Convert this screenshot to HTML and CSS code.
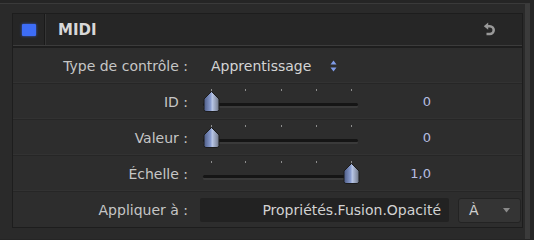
FILE: index.html
```html
<!DOCTYPE html>
<html lang="fr">
<head>
<meta charset="utf-8">
<link rel="stylesheet" href="styles.css">
</head>
<body>
<div class="frame">
  <div class="panel">
    <div class="header">
      <div class="check"><span class="led"></span></div>
      <div class="title">MIDI</div>
      <svg class="reset" width="12" height="15" viewBox="0 0 12 15">
        <path d="M0.8 4.2 L5.2 0.6 L5.2 7.8 Z" fill="#999"/>
        <path d="M4.5 4.2 H6.8 A3.9 3.9 0 0 1 6.8 12 H3.5" fill="none" stroke="#999" stroke-width="2.6"/>
      </svg>
    </div>
    <div class="row">
      <div class="label">Type de contrôle :</div>
      <div class="ctrl popup">
        <span>Apprentissage</span>
        <svg class="stepper" width="7" height="12" viewBox="0 0 7 12">
          <path d="M3.5 0.5 L6.5 4.5 H0.5 Z" fill="#7f9be8"/>
          <path d="M3.5 11.5 L6.5 7.5 H0.5 Z" fill="#7f9be8"/>
        </svg>
      </div>
    </div>
    <div class="row">
      <div class="label">ID :</div>
      <div class="ctrl slider">
        <i class="tick t1"></i><i class="tick t2"></i><i class="tick t3"></i><i class="tick t4"></i><i class="tick t5"></i>
        <div class="groove"></div>
        <svg class="thumb min" width="17" height="21" viewBox="0 0 17 21">
          <defs>
            <linearGradient id="g1" x1="0" y1="0" x2="1" y2="0">
              <stop offset="0" stop-color="#4d5c86"/>
              <stop offset="0.45" stop-color="#8b9ed0"/>
              <stop offset="0.55" stop-color="#b8c6e6"/>
              <stop offset="1" stop-color="#6f7686"/>
            </linearGradient>
          </defs>
          <path d="M8.5 0.5 L16 8 V18.5 Q16 20.5 14 20.5 H3 Q1 20.5 1 18.5 V8 Z" fill="url(#g1)" stroke="#1c1c1c" stroke-width="1"/>
        </svg>
      </div>
      <div class="value">0</div>
    </div>
    <div class="row">
      <div class="label">Valeur :</div>
      <div class="ctrl slider">
        <i class="tick t1"></i><i class="tick t2"></i><i class="tick t3"></i><i class="tick t4"></i><i class="tick t5"></i>
        <div class="groove"></div>
        <svg class="thumb min" width="17" height="21" viewBox="0 0 17 21">
          <path d="M8.5 0.5 L16 8 V18.5 Q16 20.5 14 20.5 H3 Q1 20.5 1 18.5 V8 Z" fill="url(#g1)" stroke="#1c1c1c" stroke-width="1"/>
        </svg>
      </div>
      <div class="value">0</div>
    </div>
    <div class="row">
      <div class="label">Échelle :</div>
      <div class="ctrl slider">
        <i class="tick t1"></i><i class="tick t2"></i><i class="tick t3"></i><i class="tick t4"></i><i class="tick t5"></i>
        <div class="groove"></div>
        <svg class="thumb max" width="17" height="21" viewBox="0 0 17 21">
          <path d="M8.5 0.5 L16 8 V18.5 Q16 20.5 14 20.5 H3 Q1 20.5 1 18.5 V8 Z" fill="url(#g1)" stroke="#1c1c1c" stroke-width="1"/>
        </svg>
      </div>
      <div class="value">1,0</div>
    </div>
    <div class="row last">
      <div class="label">Appliquer à :</div>
      <div class="ctrl field">Propriétés.Fusion.Opacité</div>
      <div class="button"><span>À</span><svg width="7" height="5" viewBox="0 0 7 5"><path d="M0 0 H7 L3.5 4.5 Z" fill="#8a8a8a"/></svg></div>
    </div>
  </div>
</div>
</body>
</html>
```

FILE: styles.css
```css
html, body {
  margin: 0;
  padding: 0;
}
body {
  width: 534px;
  height: 240px;
  background: #252525;
  font-family: "DejaVu Sans", "Liberation Sans", sans-serif;
  overflow: hidden;
}
.frame {
  margin-top: 3px;
  border-top: 1px solid #3a3a3a;
  height: 236px;
  width: 530px;
  box-sizing: border-box;
  background: #2a2a2a;
  border-right: 5px solid #3b3b3b;
  padding: 9px 0 0 12px;
}
.panel {
  width: 511px;
  height: 215px;
  box-sizing: border-box;
  border: 1px solid #1d1d1d;
  background: #2d2d2d;
}
.header {
  height: 31px;
  display: flex;
  align-items: center;
  background: #262626;
  border-bottom: 1px solid #3c3c3c;
  box-shadow: 0 2px 0 #1e1e1e;
  margin-bottom: 2px;
}
.check {
  width: 31px;
  height: 31px;
  border-right: 1px solid #1a1a1a;
  box-shadow: 1px 0 0 #353535;
  display: flex;
  align-items: center;
  justify-content: center;
}
.led {
  width: 14px;
  height: 12px;
  background: #3d6df7;
  border-radius: 1px;
  box-shadow: 0 0 3px rgba(60,110,255,0.8);
}
.title {
  margin-left: 13px;
  font-weight: bold;
  font-size: 15px;
  color: #d8d8d8;
  flex: 1;
}
.reset {
  margin-right: 27px;
}
.row {
  height: 36px;
  display: flex;
  align-items: center;
  border-bottom: 1px solid #262626;
  box-sizing: border-box;
  box-shadow: inset 0 -1px 0 #323232;
}
.row.last {
  border-bottom: none;
  box-shadow: none;
}
.label {
  width: 175px;
  text-align: right;
  font-size: 14px;
  color: #c6c6c6;
}
.ctrl {
  margin-left: 12px;
}
.popup {
  display: flex;
  align-items: center;
  padding-left: 11px;
  font-size: 14px;
  color: #d4d4d4;
}
.stepper {
  margin-left: 19px;
}
.slider {
  position: relative;
  width: 162px;
  height: 35px;
}
.tick {
  position: absolute;
  top: 5px;
  width: 1px;
  height: 2px;
  background: #8d8d8d;
}
.t1 { left: 11px; }
.t2 { left: 45px; }
.t3 { left: 81px; }
.t4 { left: 116px; }
.t5 { left: 151px; }
.groove {
  position: absolute;
  left: 3px;
  right: 4px;
  top: 19px;
  height: 3px;
  background: #151515;
  border-radius: 2px;
  box-shadow: 0 2px 0 #3a3a3a;
}
.thumb {
  position: absolute;
  top: 7px;
}
.thumb.min { left: 3px; }
.thumb.max { left: 143px; }
.value {
  width: 69px;
  text-align: right;
  font-size: 13px;
  color: #b6bde0;
}
.field {
  width: 249px;
  height: 24px;
  box-sizing: border-box;
  background: #222222;
  border-radius: 2px;
  display: flex;
  align-items: center;
  justify-content: flex-end;
  padding-right: 8px;
  font-size: 14px;
  color: #d2d2d2;
}
.button {
  margin-left: 9px;
  width: 63px;
  height: 25px;
  box-sizing: border-box;
  background: #343434;
  border-radius: 3px;
  border: 1px solid #232323;
  display: flex;
  align-items: center;
  justify-content: space-between;
  padding: 0 10px 0 10px;
  font-size: 14px;
  color: #d0d0d0;
}
```
